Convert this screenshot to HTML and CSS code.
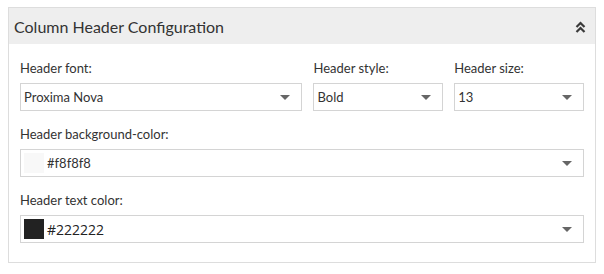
FILE: index.html
```html
<!DOCTYPE html>
<html lang="en">
<head>
    <meta charset="UTF-8">
    <meta name="viewport" content="width=device-width, initial-scale=1.0">
    <title>Column Header Configuration</title>
    <link rel="stylesheet" href="styles.css">
</head>
<body>

    <div class="panel">
        <div class="panel-heading">
            <h3>Column Header Configuration</h3>
            <svg class="collapse-icon" width="11" height="12" viewBox="0 0 11 12">
                <path d="M1.5 6 L5.5 2 L9.5 6" fill="none" stroke="#3a3a3a" stroke-width="2.2"/>
                <path d="M1.5 11 L5.5 7 L9.5 11" fill="none" stroke="#3a3a3a" stroke-width="2.2"/>
            </svg>
        </div>
        <div class="panel-body">
            <div class="row">
                <div class="form-group col-font">
                    <label>Header font:</label>
                    <div class="select">
                        <span>Proxima Nova</span>
                        <svg class="caret" width="10" height="5" viewBox="0 0 10 5"><path d="M0 0 H10 L5 5 Z" fill="#666"/></svg>
                    </div>
                </div>
                <div class="form-group col-small">
                    <label>Header style:</label>
                    <div class="select">
                        <span>Bold</span>
                        <svg class="caret" width="10" height="5" viewBox="0 0 10 5"><path d="M0 0 H10 L5 5 Z" fill="#666"/></svg>
                    </div>
                </div>
                <div class="form-group col-small">
                    <label>Header size:</label>
                    <div class="select">
                        <span>13</span>
                        <svg class="caret" width="10" height="5" viewBox="0 0 10 5"><path d="M0 0 H10 L5 5 Z" fill="#666"/></svg>
                    </div>
                </div>
            </div>

            <div class="form-group">
                <label>Header background-color:</label>
                <div class="select color-select">
                    <span class="swatch" style="background-color: #f8f8f8;"></span>
                    <span class="hex">#f8f8f8</span>
                    <svg class="caret" width="10" height="5" viewBox="0 0 10 5"><path d="M0 0 H10 L5 5 Z" fill="#666"/></svg>
                </div>
            </div>

            <div class="form-group last">
                <label>Header text color:</label>
                <div class="select color-select">
                    <span class="swatch" style="background-color: #222222;"></span>
                    <span class="hex hex-large">#222222</span>
                    <svg class="caret" width="10" height="5" viewBox="0 0 10 5"><path d="M0 0 H10 L5 5 Z" fill="#666"/></svg>
                </div>
            </div>
        </div>
    </div>

</body>
</html>
```

FILE: styles.css
```css
body {
    font-family: Lato, "Open Sans", Arial, sans-serif;
    background-color: #fff;
    color: #333;
    margin: 0;
    padding: 7px 8px;
}

.panel {
    border: 1px solid #ddd;
    width: 586px;
}

.panel-heading {
    background-color: #eee;
    height: 36px;
    display: flex;
    align-items: center;
    justify-content: space-between;
    padding: 0 9px 0 5px;
}

.panel-heading h3 {
    margin: 0;
    font-size: 16px;
    font-weight: normal;
    color: #333;
}

.collapse-icon {
    margin-top: 1px;
}

.panel-body {
    padding: 15px 11px 19px 11px;
}

.row {
    display: flex;
    gap: 11px;
}

.col-font {
    width: 283px;
}

.col-small {
    width: 130px;
}

.form-group {
    margin-bottom: 14px;
}

.form-group.last {
    margin-bottom: 0;
}

.form-group label {
    display: block;
    font-size: 13px;
    line-height: 18px;
    margin-bottom: 6px;
    color: #333;
}

.select {
    box-sizing: border-box;
    height: 28px;
    border: 1px solid #d4d4d4;
    display: flex;
    align-items: center;
    padding: 0 11px 0 3px;
    font-size: 13px;
    color: #333;
}

.select span {
    flex: 1;
}

.color-select .swatch {
    flex: none;
    width: 20px;
    height: 20px;
    margin-right: 3px;
}

.hex {
    font-size: 13px;
}

.hex-large {
    font-family: "Open Sans", Arial, sans-serif;
    font-size: 14px;
    color: #222;
}

.caret {
    flex: none;
}
```
